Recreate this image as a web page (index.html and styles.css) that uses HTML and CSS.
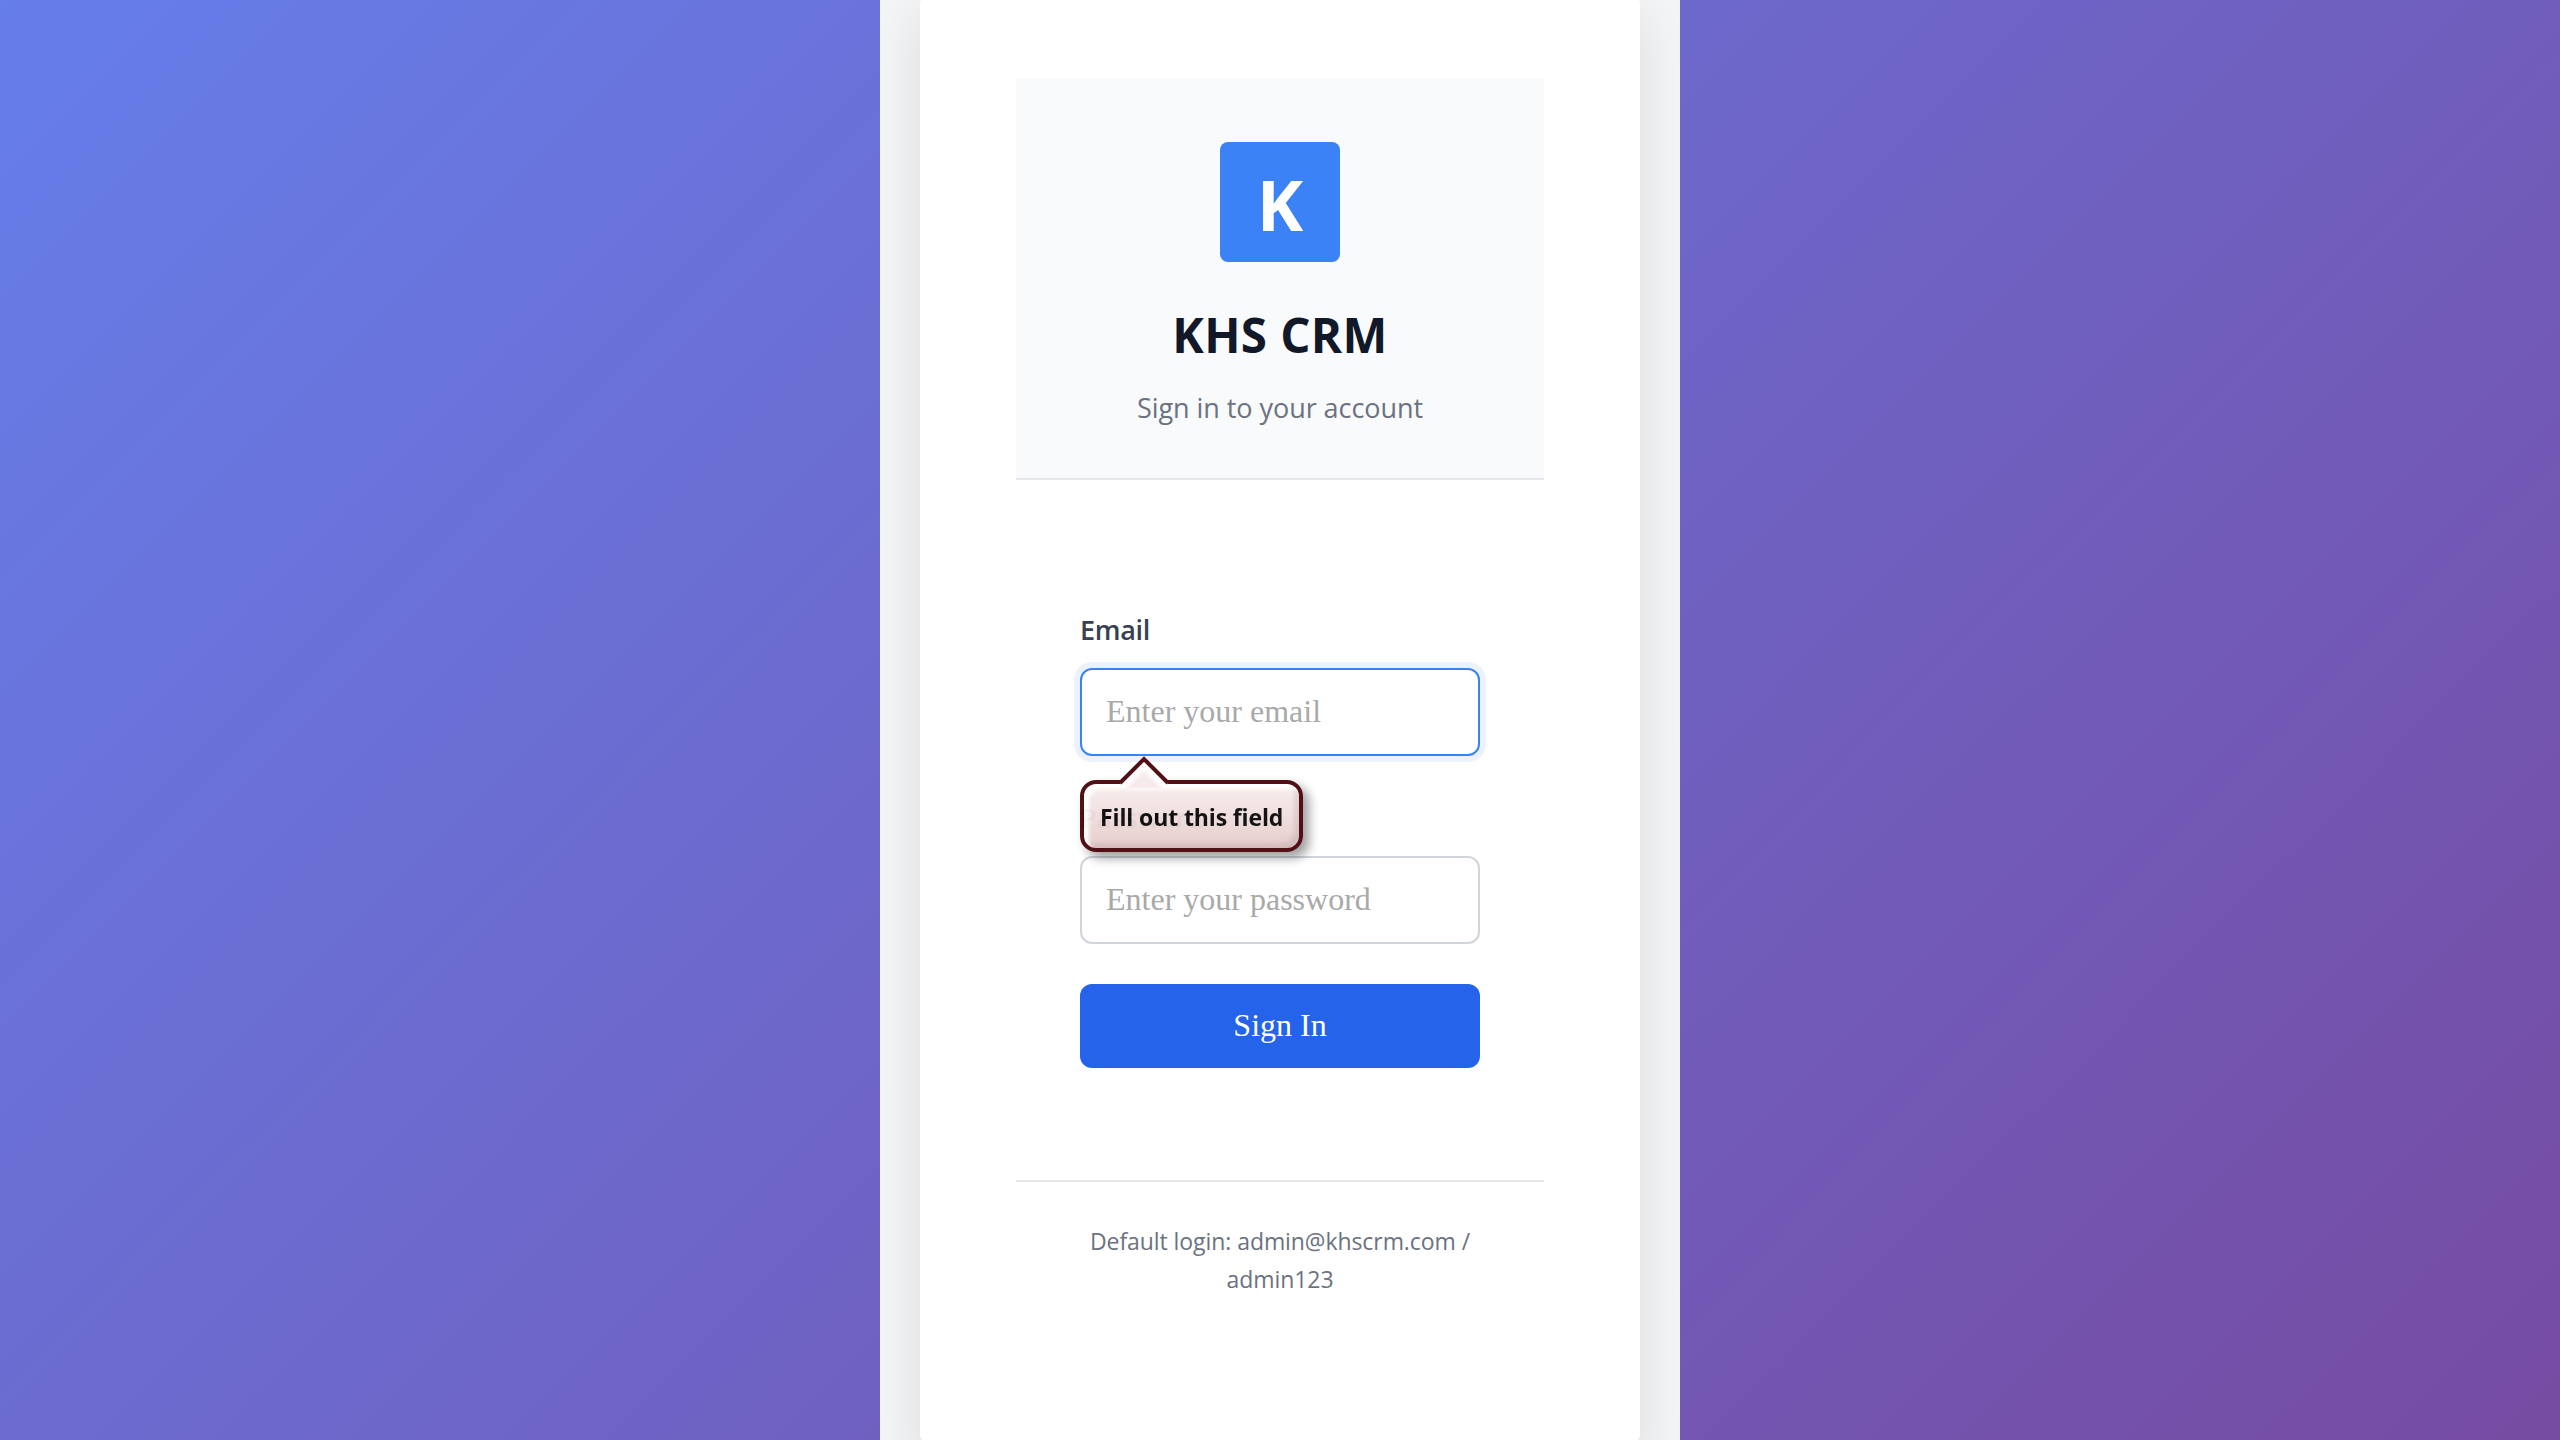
FILE: index.html
```html
<!DOCTYPE html>
<html lang="en">
<head>
<meta charset="utf-8">
<title>KHS CRM</title>
<link rel="stylesheet" href="styles.css">
</head>
<body>
<main class="panel">
  <div class="card">
    <header class="card-header">
      <div class="logo">K</div>
      <h1 class="title">KHS CRM</h1>
      <p class="subtitle">Sign in to your account</p>
    </header>
    <form class="form" novalidate>
      <div class="field">
        <label class="label" for="email">Email</label>
        <input class="input input-active" id="email" type="email" placeholder="Enter your email">
        <div class="tooltip" role="alert">
          <div class="tooltip-body">Fill out this field</div>
          <svg class="tooltip-arrow" width="56" height="32" viewBox="0 0 56 32" aria-hidden="true">
            <path d="M4 28 28 3.5 52 28V31H4Z" fill="#fffdfd"/>
            <path class="arrow-core" d="M10 33 28 15 46 33Z" fill="#f7eaea"/>
            <path d="M4 27 28 3 52 27" fill="none" stroke="#4c070b" stroke-width="4"/>
          </svg>
        </div>
      </div>
      <div class="field">
        <label class="label" for="password">Password</label>
        <input class="input" id="password" type="password" placeholder="Enter your password">
      </div>
      <button class="submit" type="button">Sign In</button>
    </form>
    <footer class="card-footer">Default login: admin@khscrm.com / admin123</footer>
  </div>
</main>
</body>
</html>
```
FILE: styles.css
```css
* { box-sizing: border-box; }

body {
  margin: 0;
  height: 1440px;
  overflow: hidden;
  display: flex;
  justify-content: center;
  background: linear-gradient(135deg, #667eea 0%, #764ba2 100%);
  font-family: "Open Sans", "Noto Sans", sans-serif;
}

.panel {
  width: 800px;
  height: 1440px;
  padding: 0 40px;
  overflow: hidden;
  background: #f3f4f6;
}

.card {
  height: 1447px;
  margin-top: -4px;
  padding: 82px 96px 0;
  border-radius: 8px;
  background: #fff;
  box-shadow: 0 20px 50px rgba(0, 0, 0, 0.1);
}

.card-header {
  height: 402px;
  padding-top: 64px;
  border-bottom: 2px solid #e5e7eb;
  background: #f9fafc;
  text-align: center;
}

.logo {
  width: 120px;
  height: 120px;
  margin: 0 auto 44px;
  padding-top: 4px;
  border-radius: 8px;
  background: #3b82f6;
  color: #fff;
  font-size: 70px;
  font-weight: 700;
  line-height: 116px;
}

.title {
  margin: 0 0 22px;
  color: #111827;
  font-size: 47.5px;
  font-weight: 700;
  line-height: 58px;
  letter-spacing: 0.4px;
}

.subtitle {
  margin: 0;
  color: #6b7280;
  font-size: 27px;
  line-height: 44px;
  letter-spacing: -0.05px;
}

.form {
  display: flex;
  flex-direction: column;
  gap: 39px;
  padding: 127px 64px 112px;
}

.field {
  position: relative;
  display: flex;
  flex-direction: column;
  gap: 16px;
}

.label {
  color: #374151;
  font-size: 27px;
  font-weight: 600;
  line-height: 45px;
  letter-spacing: -0.3px;
}

.input {
  width: 100%;
  height: 88px;
  padding: 0 24px 2px;
  border: 2px solid #d1d5db;
  border-radius: 12px;
  outline: none;
  background: #fff;
  font-family: "Liberation Serif", serif;
  font-size: 32px;
}

.input::placeholder { color: #a9a9a9; opacity: 1; }

.input-active {
  border-color: #3b82f6;
  box-shadow: 0 0 0 6px rgba(59, 130, 246, 0.1);
}

.submit {
  height: 84px;
  margin-top: 1px;
  padding: 0 0 2px;
  border: 0;
  border-radius: 12px;
  background: #2563eb;
  color: #fff;
  font-family: "Liberation Serif", serif;
  font-size: 32px;
}

.card-footer {
  padding: 40px 64px 0;
  border-top: 2px solid #e5e7eb;
  color: #6b7280;
  font-size: 23px;
  line-height: 38px;
  letter-spacing: -0.07px;
  text-align: center;
}

/* Validation bubble below the active field */
.tooltip {
  position: absolute;
  top: 173px;
  left: 0;
  z-index: 2;
  opacity: 0.96;
}

.tooltip-body {
  width: 223px;
  height: 72px;
  padding-left: 16px;
  border: 4px solid #4c070b;
  border-radius: 16px;
  background: linear-gradient(#faefef, #e6cbcb);
  box-shadow:
    6px 6px 11px rgba(0, 0, 0, 0.4),
    inset 5px 5px 4px #fff,
    inset -5px -5px 4px rgba(90, 60, 60, 0.13);
  color: #0b0b0b;
  font-size: 23px;
  font-weight: 700;
  line-height: 67px;
  letter-spacing: -0.12px;
  white-space: nowrap;
}

.tooltip-arrow {
  position: absolute;
  top: -24px;
  left: 36px;
}

.arrow-core { filter: blur(1.5px); }
```
